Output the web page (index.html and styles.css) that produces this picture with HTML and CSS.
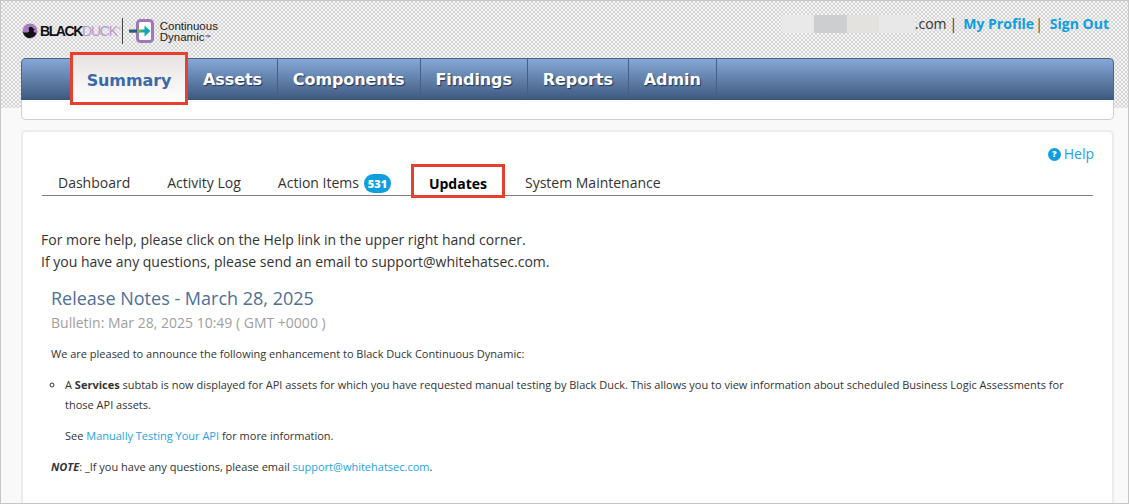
FILE: index.html
```html
<!DOCTYPE html>
<html lang="en">
<head>
<meta charset="utf-8">
<title>Continuous Dynamic</title>
<link rel="stylesheet" href="styles.css">
</head>
<body>
<div class="page">
  <header class="top">
    <div class="brand">
      <svg class="duck" viewBox="0 0 16 16" width="16" height="16" aria-hidden="true">
        <circle cx="8" cy="8" r="7.500" fill="#a77bc0"/>
        <path d="M1 9c2 .8 4 .8 5.500 0 .8-.5.8-1.600.3-2.300-.6-1.300.2-2.900 2-3 1.500 0 2.300 1 2.500 2l2 .5-1.800.8c.2 2.700 1.500 3 2.900 2.600-.8 3.300-3.500 5.400-6.900 5.400-3.100 0-5.700-2.400-6.500-6z" fill="#111"/>
      </svg>
      <span class="word-black">BLACK</span><span class="word-duck">DUCK</span><span class="tm">™</span>
      <span class="brand-sep"></span>
      <svg class="cd-icon" viewBox="0 0 26 26" width="26" height="26" aria-hidden="true">
        <rect x="8.500" y="2.500" width="15" height="21" rx="3" fill="#fff" stroke="#9d78bb" stroke-width="3"/>
        <rect x="0" y="11.500" width="8" height="3.200" fill="#245f80"/>
        <rect x="8" y="11.500" width="4" height="3.200" fill="#7fb04c"/>
        <path d="M12 11.500h3.500V7.500L21.500 13l-6 5.500v-4H12z" fill="#14a7b5"/>
      </svg>
      <span class="cd-name">Continuous<br>Dynamic<span class="cd-tm">™</span></span>
    </div>
    <div class="account">
      <span class="redact">
        <i class="r1"></i><i class="r2"></i><i class="r3"></i><i class="r4"></i>
      </span>
      <span class="domain">.com</span>
      <span class="bar">|</span>
      <a class="acct-link" href="#">My Profile</a>
      <span class="bar bar-second">|</span>
      <a class="acct-link" href="#">Sign Out</a>
    </div>
  </header>

  <div class="nav-panel">
    <nav class="nav">
      <a class="nav-item nav-active" href="#">Summary</a>
      <a class="nav-item" href="#">Assets</a>
      <a class="nav-item" href="#">Components</a>
      <a class="nav-item" href="#">Findings</a>
      <a class="nav-item" href="#">Reports</a>
      <a class="nav-item" href="#">Admin</a>
    </nav>
    <div class="subnav"></div>
  </div>

  <main class="card">
    <div class="help-row">
      <a class="help" href="#"><span class="help-icon">?</span>Help</a>
    </div>
    <div class="tabs">
      <a class="tab" href="#">Dashboard</a>
      <a class="tab" href="#">Activity Log</a>
      <a class="tab tab-badge" href="#">Action Items <span class="badge">531</span></a>
      <a class="tab tab-active" href="#">Updates</a>
      <a class="tab" href="#">System Maintenance</a>
    </div>
    <p class="intro">For more help, please click on the Help link in the upper right hand corner.<br>If you have any questions, please send an email to support@whitehatsec.com.</p>
    <article class="notes">
      <h1 class="notes-title">Release Notes - March 28, 2025</h1>
      <p class="bulletin">Bulletin: Mar 28, 2025 10:49 ( GMT +0000 )</p>
      <p class="body-text">We are pleased to announce the following enhancement to Black Duck Continuous Dynamic:</p>
      <ul class="list">
        <li>A <b>Services</b> subtab is now displayed for API assets for which you have requested manual testing by Black Duck. This allows you to view information about scheduled Business Logic Assessments for those API assets.
          <p class="see">See <a href="#">Manually Testing Your API</a> for more information.</p>
        </li>
      </ul>
      <p class="body-text note"><b><i>NOTE</i></b>: _If you have any questions, please email <a href="#">support@whitehatsec.com</a>.</p>
    </article>
  </main>
</div>
</body>
</html>
```

FILE: styles.css
```css
* { box-sizing: border-box; }
html, body { margin: 0; padding: 0; }
body {
  width: 1129px;
  height: 504px;
  overflow: hidden;
  font-family: "Open Sans", "Liberation Sans", sans-serif;
  color: #333;
  background: #f9f9f9;
}
a { text-decoration: none; }
.page {
  height: 504px;
  border: 1px solid #c6c6c6;
  overflow: hidden;
  background:
    linear-gradient(#f9f9f9, #f9f9f9) 0 107px / 100% 400px no-repeat,
    repeating-conic-gradient(#d6d6d6 0 25%, #f4f4f4 0 50%) 0 0 / 4px 4px;
}
.top {
  height: 57px;
  display: flex;
  justify-content: space-between;
  padding: 0 19px 0 21px;
}
.brand { display: flex; align-items: center; height: 45px; padding-top: 15px; }
.duck { margin-right: 2px; }
.word-black, .word-duck {
  font-family: "Liberation Sans", Arial, sans-serif;
  font-size: 14px;
}
.word-black { font-weight: 700; color: #111; letter-spacing: -1.400px; }
.word-duck { color: #b897cf; font-weight: 400; letter-spacing: -1.200px; }
.tm { font-size: 5px; color: #b897cf; align-self: flex-start; margin-top: 10px; }
.brand-sep { width: 1px; height: 26px; background: #444; margin: 0 6px 0 1px; }
.cd-name {
  font-family: "Liberation Sans", Arial, sans-serif;
  font-size: 11.500px;
  line-height: 11px;
  color: #222;
  margin: 2px 0 0 5px;
}
.cd-tm { font-size: 6px; vertical-align: 2px; }
.account {
  display: flex;
  align-items: baseline;
  height: 45px;
  padding-top: 13px;
  font-size: 14px;
  line-height: 20px;
}
.redact { display: flex; align-self: flex-start; height: 18px; margin-top: 1px; }
.redact i { display: block; height: 18px; }
.r1 { width: 32px; background: #e9e9e9; }
.r2 { width: 33px; background: #cdced0; }
.r3 { width: 32px; background: #e4e2de; }
.r4 { width: 36px; background: #e8e8e8; }
.domain { color: #333; }
.bar { color: #333; margin: 0 6px 0 3px; }
.bar-second { margin: 0 7px 0 1px; color: #5a4a2a; }
.acct-link { color: #0f9ee0; font-weight: 700; }
.nav-panel {
  margin: 0 14px 0 20px;
  height: 62px;
  background: #fff;
  border: 1px solid #cfcfcf;
  border-top: 0;
  border-radius: 5px;
}
.nav {
  display: flex;
  height: 42px;
  margin: 0 -1px;
  background: linear-gradient(#85a8d8, #3f5a80);
  border: 1px solid #4a6488;
  border-bottom: 1px solid #3d5478;
  border-radius: 5px 5px 0 0;
  padding-left: 48px;
  align-items: stretch;
}
.nav-item {
  display: flex;
  align-items: center;
  padding: 0 15px;
  font-family: "DejaVu Sans", sans-serif;
  font-weight: 700;
  font-size: 16px;
  letter-spacing: -.1px;
  color: #fff;
  text-shadow: 1px 1px 1px #1e3557;
  border-right: 1px solid #40608a;
}
.nav-active {
  width: 118px;
  height: 53px;
  margin-top: -7px;
  justify-content: center;
  color: #3b6aa8;
  text-shadow: none;
  background: linear-gradient(#e8e2e2, #fff);
  border: 3px solid #e8402f;
  padding: 3px 0 0;
}
.card {
  margin: 10px 14px 0 20px;
  height: 400px;
  background: #fff;
  border: 2px solid #ececec;
  border-radius: 5px;
  padding: 0 18px 0 18px;
}
.help-row { display: flex; justify-content: flex-end; height: 35px; padding: 12px 0 0; }
.help { color: #1ca4e4; font-size: 14px; line-height: 20px; height: 20px; display: flex; align-items: center; }
.help-icon {
  display: inline-flex; align-items: center; justify-content: center;
  width: 13px; height: 13px; border-radius: 50%;
  background: #0f9ee0; color: #fff; font-size: 9px; font-weight: 800; margin-right: 3px;
}
.tabs {
  display: flex;
  height: 29px;
  margin: 0 1px;
  border-bottom: 1px solid #808080;
  padding-left: 16px;
  align-items: flex-end;
}
.tab { color: #333; font-size: 14px; line-height: 20px; margin-right: 37px; padding-bottom: 2px; white-space: nowrap; }
.tab-badge { margin-right: 20px; display: flex; align-items: center; gap: 5px; }
.badge {
  display: inline-block; height: 19px; line-height: 19px; min-width: 27px; text-align: center;
  background: #0f9ee0; color: #fff; font-size: 11px; font-weight: 800; border-radius: 10px;
}
.tab-active {
  font-weight: 700;
  color: #000;
  height: 34px;
  width: 94px;
  margin-right: 20px;
  border: 3px solid #e8402f;
  text-align: center;
  padding: 7px 0 0;
  margin-bottom: -3px;
}
.intro { margin: 33px 0 0; font-size: 14px; line-height: 22px; color: #333; }
.notes { padding-left: 10px; }
.notes-title { margin: 13px 0 0; font-size: 18px; line-height: 24px; font-weight: 400; color: #4f7097; }
.bulletin { margin: 3px 0 0; font-size: 14px; line-height: 20px; color: #a0a0a0; }
.body-text { font-size: 11px; line-height: 16px; margin: 13px 0 0; color: #333; }
.list { margin: 13px 0 0; padding: 0 0 0 14px; list-style: circle; font-size: 11px; line-height: 20px; }
.see { margin: 11px 0 0; }
.see a, .note a { color: #1ca4e4; }
.note { margin-top: 13px; }
```
